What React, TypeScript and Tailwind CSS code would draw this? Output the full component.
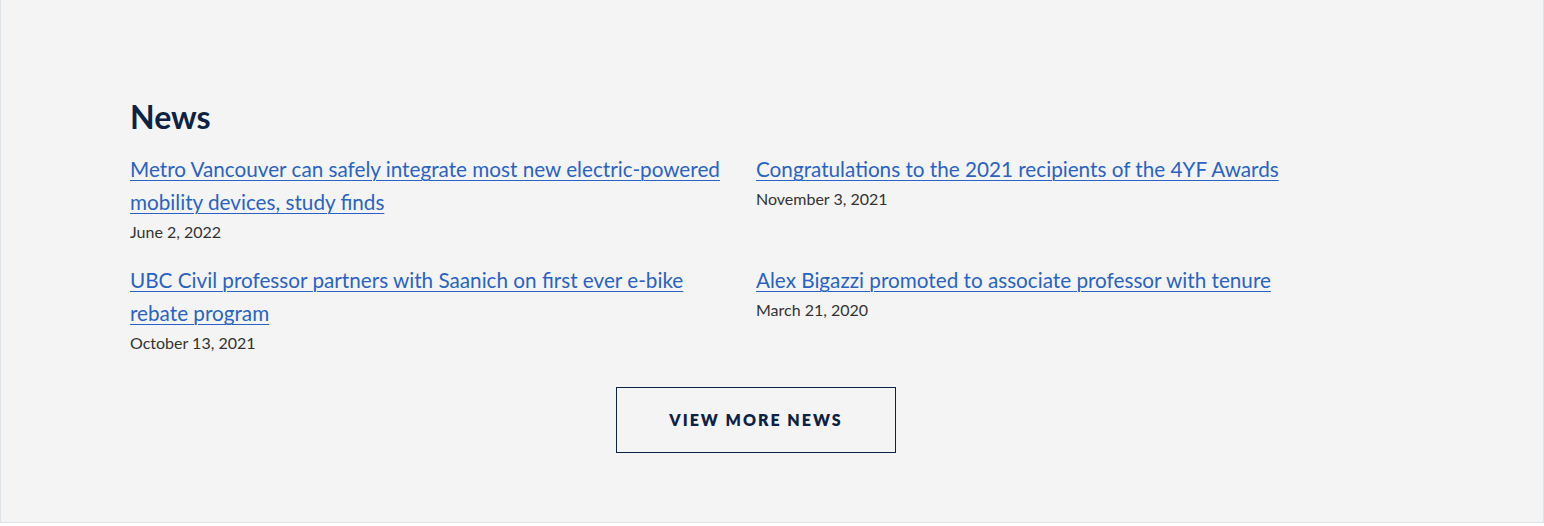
const news = [
  {
    title: "Metro Vancouver can safely integrate most new electric-powered mobility devices, study finds",
    date: "June 2, 2022",
  },
  {
    title: "Congratulations to the 2021 recipients of the 4YF Awards",
    date: "November 3, 2021",
  },
  {
    title: "UBC Civil professor partners with Saanich on first ever e-bike rebate program",
    date: "October 13, 2021",
  },
  {
    title: "Alex Bigazzi promoted to associate professor with tenure",
    date: "March 21, 2020",
  },
];

export default function App() {
  return (
    <div className="bg-white h-[526px]" style={{ fontFamily: "Lato, 'Open Sans', sans-serif" }}>
      <section className="h-[523px] bg-[#f4f4f4] border-x border-b border-[#dde2e6] pt-[94px]">
        <div className="w-[1252px] ml-[129px]">
          <h2 className="text-[32px] leading-[46px] font-bold text-[#0c2344] mb-[13px]">News</h2>
          <div className="grid grid-cols-2 gap-y-[19px]">
            {news.map((item) => (
              <div key={item.title} className="pr-[12px]">
                <a href="#" className="text-[20.7px] leading-[33px] text-[#2a63c3] underline underline-offset-[3px] decoration-1">
                  {item.title}
                </a>
                <p className="text-[16px] leading-[26px] text-[#333]">{item.date}</p>
              </div>
            ))}
          </div>
          <div className="flex justify-center mt-[31px]">
            <a
              href="#"
              className="w-[280px] h-[66px] flex items-center justify-center border border-[#0c2344] text-[#0c2344] text-[16px] font-extrabold tracking-[2px] uppercase"
            >
              View more news
            </a>
          </div>
        </div>
      </section>
    </div>
  );
}
